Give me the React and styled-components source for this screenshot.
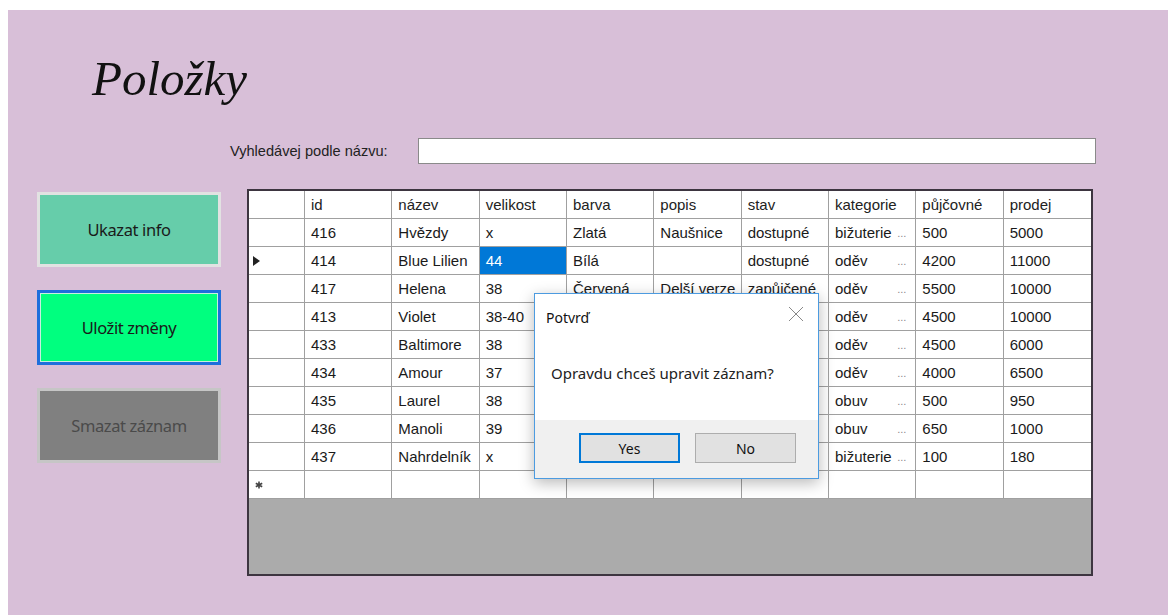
import styled, { createGlobalStyle } from 'styled-components'

const GlobalStyle = createGlobalStyle`
  html, body {
    margin: 0;
    padding: 0;
    background: #fff;
  }
  body {
    font-family: "Liberation Sans", Arial, sans-serif;
  }
`

const Page = styled.div`
  padding: 10px 0 0 8px;
`

const Window = styled.div`
  position: relative;
  height: 605px;
  background: #d8bfd8;
  overflow: hidden;
`

const Title = styled.h1`
  margin: 41px 0 0 84px;
  font-family: "Liberation Serif", "Times New Roman", serif;
  font-style: italic;
  font-weight: normal;
  font-size: 49px;
  line-height: 56px;
  color: #111;
`

const SearchRow = styled.div`
  display: flex;
  align-items: center;
  margin: 31px 0 0 222px;
`

const SearchLabel = styled.label`
  width: 188px;
  font-size: 14.6px;
  color: #222;
`

const SearchInput = styled.input`
  box-sizing: border-box;
  width: 678px;
  height: 26px;
  border: 1px solid #8a8a8a;
  background: #fff;
  outline: none;
`

const Main = styled.div`
  display: flex;
  align-items: flex-start;
  margin-top: 25px;
  padding-left: 29px;
`

const Actions = styled.div`
  display: flex;
  flex-direction: column;
  gap: 23px;
  margin-top: 3px;
  width: 184px;
`

const ActionButton = styled.button`
  box-sizing: border-box;
  height: 75px;
  border: 3px solid ${({ $focused, $border }) => ($focused ? '#1e6fdc' : $border)};
  box-shadow: ${({ $focused }) => ($focused ? 'inset 0 0 0 1px #c8eede' : 'none')};
  background: ${({ $bg }) => $bg};
  color: ${({ $disabled }) => ($disabled ? '#4a4a4a' : '#1a1a1a')};
  font-family: "Noto Sans", "Open Sans", sans-serif;
  font-size: 16.5px;
  letter-spacing: -0.4px;
  cursor: pointer;
`

const GridFrame = styled.div`
  position: relative;
  margin-left: 26px;
  box-sizing: border-box;
  width: 846px;
  height: 387px;
  border: 2px solid #3d3540;
  background: #ababab;
`

const Grid = styled.div`
  display: grid;
  grid-template-columns: 56px repeat(9, 1fr);
  grid-auto-rows: 28px;
  background: #fff;
`

const Cell = styled.div`
  box-sizing: border-box;
  display: flex;
  align-items: center;
  padding: 0 4px 0 6px;
  border-right: 1px solid #a0a0a0;
  border-bottom: 1px solid #a0a0a0;
  background: ${({ $selected }) => ($selected ? '#0078d7' : '#fff')};
  color: ${({ $selected }) => ($selected ? '#fff' : '#1a1a1a')};
  font-size: 15px;
  white-space: nowrap;
  overflow: hidden;

  &:nth-child(10n) {
    border-right: none;
  }
`

const HeadCell = styled(Cell)`
  color: #222;
`

const RowHead = styled(Cell)`
  padding-left: 4px;
`

const Ellipsis = styled.span`
  flex-shrink: 0;
  margin: 0 5px 0 auto;
  padding-left: 5px;
  color: #8a8a8a;
  font-size: 11px;
`

const Dialog = styled.div`
  position: absolute;
  left: 285px;
  top: 102px;
  box-sizing: border-box;
  width: 285px;
  height: 186px;
  border: 1px solid #4c9be0;
  background: #fff;
  box-shadow: 0 4px 14px rgba(0, 0, 0, 0.28);
  font-family: "Noto Sans", "Open Sans", sans-serif;
  display: flex;
  flex-direction: column;
`

const DialogHead = styled.div`
  display: flex;
  align-items: center;
  justify-content: space-between;
  height: 46px;
  padding: 0 14px 0 11px;
  font-size: 14px;
  color: #111;
`

const CloseX = styled.svg`
  width: 16px;
  height: 16px;
  margin-top: -6px;
`

const Message = styled.div`
  flex: 1;
  display: flex;
  align-items: center;
  padding: 0 0 14px 16px;
  font-size: 15px;
  color: #222;
`

const DialogFoot = styled.div`
  display: flex;
  justify-content: flex-end;
  gap: 15px;
  height: 58px;
  padding: 13px 22px 0 0;
  box-sizing: border-box;
  background: #f0f0f0;
`

const DialogButton = styled.button`
  box-sizing: border-box;
  width: 101px;
  height: 30px;
  border: ${({ $primary }) => ($primary ? '2px solid #0078d7' : '1px solid #adadad')};
  background: #e1e1e1;
  font-family: "Noto Sans", "Open Sans", sans-serif;
  font-size: 14px;
  color: #111;
`

const columns = ['id', 'název', 'velikost', 'barva', 'popis', 'stav', 'kategorie', 'půjčovné', 'prodej']

const rows = [
  ['416', 'Hvězdy', 'x', 'Zlatá', 'Naušnice', 'dostupné', 'bižuterie', '500', '5000'],
  ['414', 'Blue Lilien', '44', 'Bílá', '', 'dostupné', 'oděv', '4200', '11000'],
  ['417', 'Helena', '38', 'Červená', 'Delší verze', 'zapůjčené', 'oděv', '5500', '10000'],
  ['413', 'Violet', '38-40', '', '', '', 'oděv', '4500', '10000'],
  ['433', 'Baltimore', '38', '', '', '', 'oděv', '4500', '6000'],
  ['434', 'Amour', '37', '', '', '', 'oděv', '4000', '6500'],
  ['435', 'Laurel', '38', '', '', '', 'obuv', '500', '950'],
  ['436', 'Manoli', '39', '', '', '', 'obuv', '650', '1000'],
  ['437', 'Nahrdelník', 'x', '', '', '', 'bižuterie', '100', '180'],
]

const CurrentArrow = () => (
  <svg width="7" height="10" viewBox="0 0 7 10">
    <path d="M0 0 L7 5 L0 10 Z" fill="#222" />
  </svg>
)

const NewRowMark = () => (
  <svg width="8" height="8" viewBox="0 0 8 8" style={{ marginLeft: 2 }}>
    <path d="M4 0.5 V7.5 M0.8 2.2 L7.2 5.8 M0.8 5.8 L7.2 2.2" stroke="#444" strokeWidth="1.6" />
  </svg>
)

const App = () => (
  <>
    <GlobalStyle />
    <Page>
      <Window>
        <Title>Položky</Title>
        <SearchRow>
          <SearchLabel htmlFor="hledat">Vyhledávej podle názvu:</SearchLabel>
          <SearchInput id="hledat" />
        </SearchRow>
        <Main>
          <Actions>
            <ActionButton $bg="#66cdaa" $border="#e2e2e2">Ukazat info</ActionButton>
            <ActionButton $bg="#00ff7f" $focused>Uložit změny</ActionButton>
            <ActionButton $bg="#808080" $border="#c6c6c6" $disabled>Smazat záznam</ActionButton>
          </Actions>
          <GridFrame>
            <Grid>
              <HeadCell />
              {columns.map(c => (
                <HeadCell key={c}>{c}</HeadCell>
              ))}
              {rows.map((r, i) => [
                <RowHead key={`h${i}`}>{i === 1 && <CurrentArrow />}</RowHead>,
                ...r.map((v, j) => (
                  <Cell key={`${i}-${j}`} $selected={i === 1 && j === 2}>
                    {v}
                    {j === 6 && <Ellipsis>...</Ellipsis>}
                  </Cell>
                )),
              ])}
              <RowHead>
                <NewRowMark />
              </RowHead>
              {columns.map(c => (
                <Cell key={`new-${c}`} />
              ))}
            </Grid>
            <Dialog>
              <DialogHead>
                Potvrď
                <CloseX viewBox="0 0 16 16">
                  <path d="M1 1 L15 15 M15 1 L1 15" stroke="#888" strokeWidth="1" />
                </CloseX>
              </DialogHead>
              <Message>Opravdu chceš upravit záznam?</Message>
              <DialogFoot>
                <DialogButton $primary>Yes</DialogButton>
                <DialogButton>No</DialogButton>
              </DialogFoot>
            </Dialog>
          </GridFrame>
        </Main>
      </Window>
    </Page>
  </>
)

export default App
